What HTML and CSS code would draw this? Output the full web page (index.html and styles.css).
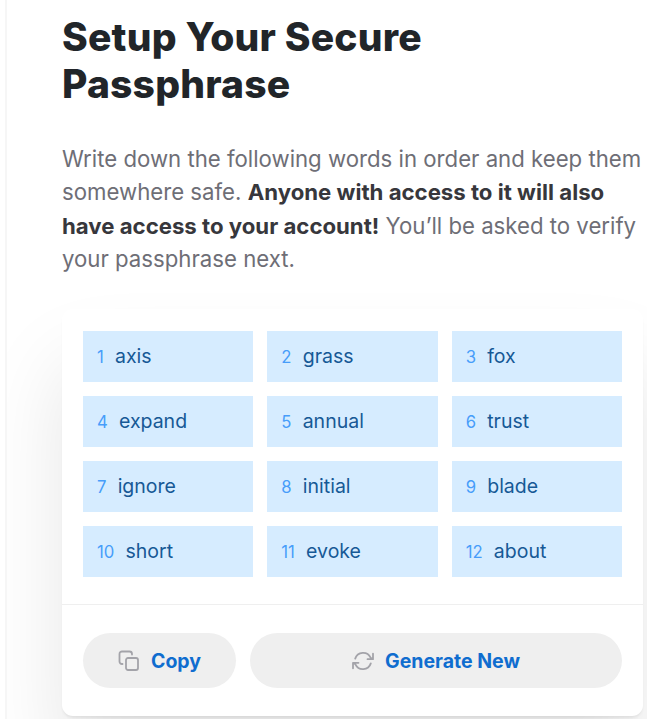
FILE: index.html
```html
<!DOCTYPE html>
<html lang="en">
<head>
    <meta charset="UTF-8">
    <meta name="viewport" content="width=device-width, initial-scale=1.0">
    <title>Setup Your Secure Passphrase</title>
    <link rel="stylesheet" href="styles.css">
</head>
<body>
    <main class="panel">
        <h1>Setup Your Secure<br>Passphrase</h1>
        <p class="intro">
            Write down the following words in order and keep them<br>
            somewhere safe. <strong>Anyone with access to it will also<br>
            have access to your account!</strong> You’ll be asked to verify<br>
            your passphrase next.
        </p>

        <div class="card">
            <ol class="words">
                <li><span class="num">1</span>axis</li>
                <li><span class="num">2</span>grass</li>
                <li><span class="num">3</span>fox</li>
                <li><span class="num">4</span>expand</li>
                <li><span class="num">5</span>annual</li>
                <li><span class="num">6</span>trust</li>
                <li><span class="num">7</span>ignore</li>
                <li><span class="num">8</span>initial</li>
                <li><span class="num">9</span>blade</li>
                <li><span class="num">10</span>short</li>
                <li><span class="num">11</span>evoke</li>
                <li><span class="num">12</span>about</li>
            </ol>
            <div class="actions">
                <button type="button" class="btn btn-copy">
                    <svg class="icon" viewBox="0 0 22 22">
                        <rect x="8" y="8" width="12" height="12" rx="2"/>
                        <path d="M4.500 14H4a2.500 2.500 0 0 1-2.500-2.500V4A2.500 2.500 0 0 1 4 1.500h7.500A2.500 2.500 0 0 1 14 4v.5"/>
                    </svg>
                    Copy
                </button>
                <button type="button" class="btn btn-generate">
                    <svg class="icon" viewBox="0 0 22 22">
                        <path d="M3.200 8.600A8.300 8.300 0 0 1 18.600 7.600l1.600 1.400M21 3.700v5.500h-5.500"/>
                        <path d="M18.800 13.400A8.300 8.300 0 0 1 3.400 14.400l-1.600-1.400M1 18.300v-5.500h5.500"/>
                    </svg>
                    Generate New
                </button>
            </div>
        </div>
    </main>
</body>
</html>
```
FILE: styles.css
```css
* {
    box-sizing: border-box;
}

html {
    overflow: hidden;
}

body {
    margin: 0;
    background-color: #fff;
    color: #212529;
    font-family: Inter, "Liberation Sans", sans-serif;
    font-optical-sizing: none;
}

.panel {
    height: 719px;
    margin-left: 5px;
    padding: 13px 4px 0 55px;
    border-left: 2px solid #f6f6f6;
    overflow: hidden;
}

h1 {
    margin: 0;
    font-size: 39px;
    font-weight: 800;
    line-height: 47px;
    letter-spacing: 0.2px;
}

.intro {
    margin: 35px 0 0;
    color: #6e6e76;
    font-size: 22.2px;
    line-height: 33.3px;
    white-space: nowrap;
}

.intro strong {
    color: #37373c;
    font-weight: 700;
}

.card {
    margin-top: 34px;
    background-color: #fff;
    border-radius: 11px;
    box-shadow: 0 3px 3px -1px rgba(0, 0, 0, 0.07), 0 56px 84px rgba(0, 0, 0, 0.1);
}

.words {
    display: grid;
    grid-template-columns: repeat(3, 1fr);
    gap: 14px;
    margin: 0;
    padding: 22px 21px 27px;
    list-style: none;
}

.words li {
    display: flex;
    align-items: baseline;
    height: 51px;
    padding: 0 14px;
    background-color: #d6ecff;
    color: #165996;
    font-size: 19.5px;
    line-height: 51.5px;
}

.num {
    margin-right: 11.2px;
    color: #479dfa;
    font-size: 16.7px;
}

.actions {
    display: flex;
    gap: 14px;
    padding: 28px 21px;
    border-top: 1px solid #efefef;
}

.btn {
    display: flex;
    align-items: center;
    justify-content: center;
    gap: 11px;
    height: 55px;
    padding: 0;
    border: none;
    border-radius: 28px;
    background-color: #efefef;
    color: #0f6dcf;
    font-family: inherit;
    font-size: 19.5px;
    font-weight: 650;
    cursor: pointer;
}

.btn-copy {
    width: 153px;
}

.btn-generate {
    flex: 1;
}

.icon {
    width: 22px;
    height: 22px;
    fill: none;
    stroke: #a3a3a9;
    stroke-width: 1.8;
    stroke-linecap: round;
    stroke-linejoin: round;
}
```
